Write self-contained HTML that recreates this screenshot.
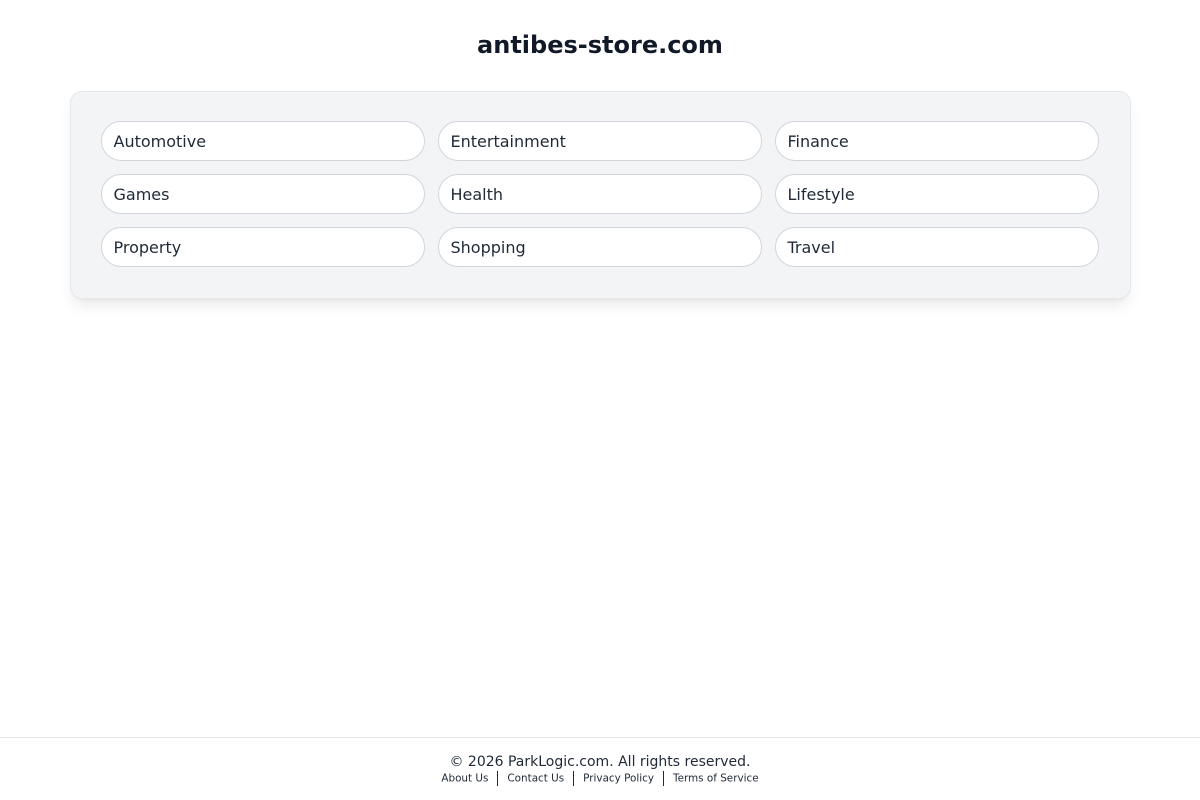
<!DOCTYPE html>
<html><head><meta charset="utf-8"><style>
*{box-sizing:border-box;margin:0;padding:0}
body{width:1200px;height:800px;background:#fff;font-family:"DejaVu Sans","Liberation Sans",sans-serif;color:#111827;position:relative;overflow:hidden}
h1{position:absolute;top:29px;left:0;width:1200px;text-align:center;font-size:24px;font-weight:bold;line-height:32px}
.box{position:absolute;left:69.5px;top:90.5px;width:1061px;height:208px;background:#f3f4f6;border:1px solid #e5e7eb;border-radius:12px;box-shadow:0 10px 15px -3px rgba(0,0,0,0.08),0 4px 6px -4px rgba(0,0,0,0.06);padding:29.5px 30px;display:grid;grid-template-columns:repeat(3,324px);grid-template-rows:repeat(3,40px);align-content:start;column-gap:13px;row-gap:13px}
.p{height:40px;background:#fff;border:1px solid #d1d5db;border-radius:20px;padding-left:12px;font-size:16px;line-height:40px;color:#1f2937}
.f{position:absolute;top:737px;left:0;width:1200px;border-top:1px solid #e5e7eb;text-align:center}
.c{font-size:14px;margin-top:16px;line-height:17px;color:#1f2937}
.l{font-size:10.4px;line-height:14px;margin-top:0px;color:#1f2937}
.l span{display:inline-block;border-left:1px solid #1f2937;height:15px;vertical-align:middle;margin:0 9px}
</style></head><body>
<h1>antibes-store.com</h1>
<div class="box">
<div class="p">Automotive</div><div class="p">Entertainment</div><div class="p">Finance</div>
<div class="p">Games</div><div class="p">Health</div><div class="p">Lifestyle</div>
<div class="p">Property</div><div class="p">Shopping</div><div class="p">Travel</div>
</div>
<div class="f"><div class="c">© 2026 ParkLogic.com. All rights reserved.</div>
<div class="l">About Us<span></span>Contact Us<span></span>Privacy Policy<span></span>Terms of Service</div></div>
</body></html>
